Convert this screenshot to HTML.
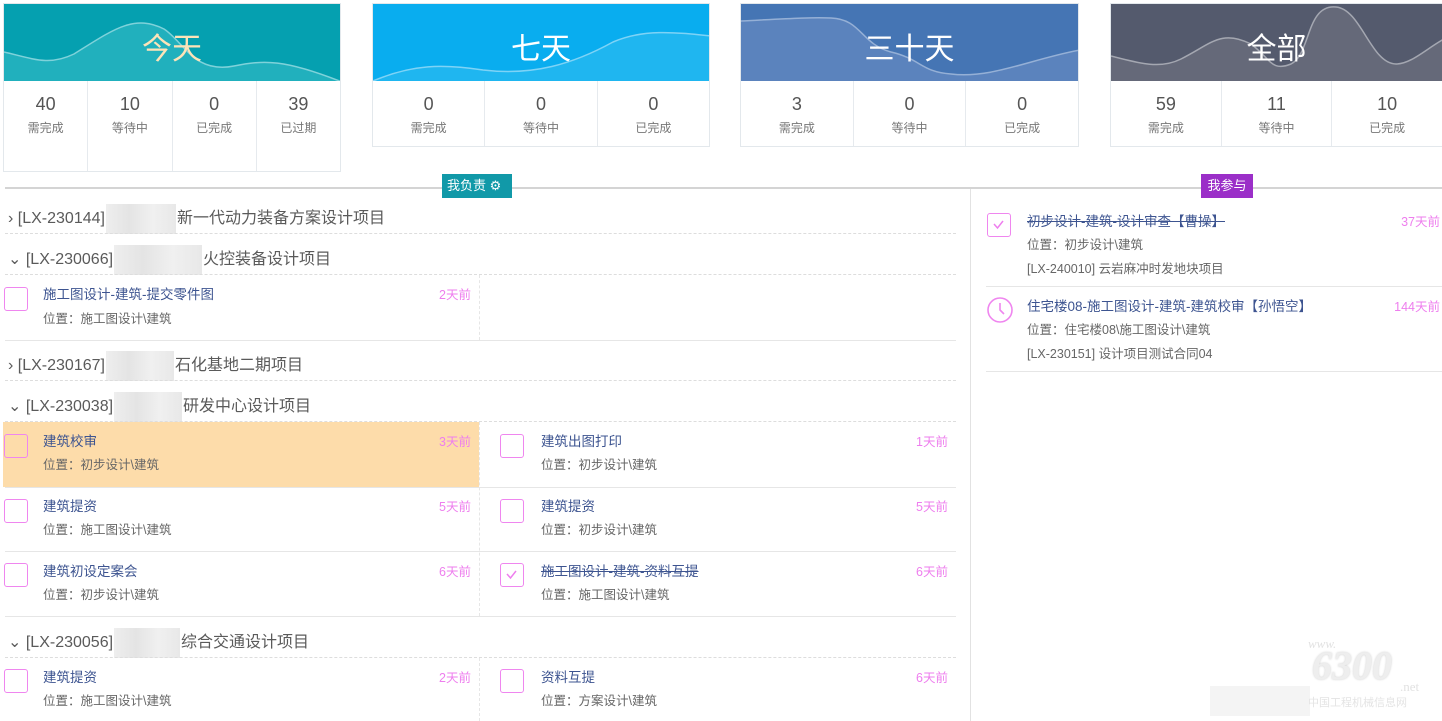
<!DOCTYPE html>
<html><head><meta charset="utf-8"><style>
*{margin:0;padding:0;box-sizing:border-box}
body{width:1442px;height:721px;overflow:hidden;background:#fff;font-family:"Liberation Sans","Noto Sans CJK SC",sans-serif;position:relative;color:#555}
.a{position:absolute}
.card{position:absolute;top:3px;border:1px solid #e3e8ec;background:#fff}
.hd{position:absolute;left:0;top:0;right:0;height:77px;overflow:hidden}
.hd span{position:absolute;left:0;right:0;top:20px;text-align:center;font-size:30px;color:#fff}
.cells{position:absolute;top:77px;left:0;right:0;bottom:0;display:flex}
.cells div{flex:1;border-right:1px solid #e6eaee;text-align:center}
.cells div:last-child{border-right:none}
.cells b{display:block;font-weight:normal;font-size:18px;color:#555;margin-top:13px}
.cells i{display:block;font-style:normal;font-size:12px;color:#777;margin-top:4px}
.gh{position:absolute;left:8px;font-size:16px;color:#5a5a5a;line-height:20px;white-space:nowrap}
.blur{display:inline-block;height:30px;vertical-align:middle;background:linear-gradient(90deg,#eee,#e4e4e4,#f0f0f0,#e8e8e8);margin:0 1px}
.dash{position:absolute;left:5px;width:951px;border-top:1px dashed #ddd}
.cb{position:absolute;width:24px;height:24px;border:1.5px solid #ef86ef;border-radius:3px}
.t{position:absolute;font-size:13.5px;color:#3d5490;white-space:nowrap;line-height:16px}
.l{position:absolute;font-size:12.5px;color:#666;white-space:nowrap;line-height:16px}
.tm{position:absolute;font-size:12.5px;color:#ee7eee;line-height:16px;text-align:right}
.s{text-decoration:line-through}
.hl{position:absolute;border-top:1px solid #e6e6e6}
</style></head><body>

<div class="card" style="left:3px;width:338px;height:169px">
 <div class="hd" style="background:#05a0b0"><svg width="338" height="77" class="a" style="left:0;top:0"><path d="M0 48 C30 55 45 62 70 50 C110 25 130 10 160 25 C180 38 190 70 230 62 C260 56 280 55 338 78 L0 78Z" fill="#21b0bd"/><path d="M0 48 C30 55 45 62 70 50 C110 25 130 10 160 25 C180 38 190 70 230 62 C260 56 280 55 338 78" stroke="#7fd2da" stroke-width="1.5" fill="none"/></svg><span style="color:#fde3b8">今天</span></div>
 <div class="cells"><div><b>40</b><i>需完成</i></div><div><b>10</b><i>等待中</i></div><div><b>0</b><i>已完成</i></div><div><b>39</b><i>已过期</i></div></div>
</div>
<div class="card" style="left:372px;width:338px;height:144px">
 <div class="hd" style="background:#09adef"><svg width="338" height="77" class="a" style="left:0;top:0"><path d="M0 77 C40 60 70 60 110 66 C160 72 200 60 240 38 C270 25 300 28 338 32 L338 78 L0 78Z" fill="#1fb6f0"/><path d="M0 77 C40 60 70 60 110 66 C160 72 200 60 240 38 C270 25 300 28 338 32" stroke="#7ed3f6" stroke-width="1.5" fill="none"/></svg><span>七天</span></div>
 <div class="cells"><div><b>0</b><i>需完成</i></div><div><b>0</b><i>等待中</i></div><div><b>0</b><i>已完成</i></div></div>
</div>
<div class="card" style="left:740px;width:339px;height:144px">
 <div class="hd" style="background:#4575b4"><svg width="339" height="77" class="a" style="left:0;top:0"><path d="M0 17 C40 15 70 13 90 14 C120 15 120 40 150 48 C180 55 180 68 210 70 C250 75 290 55 339 46 L339 78 L0 78Z" fill="#5b83bd"/><path d="M0 17 C40 15 70 13 90 14 C120 15 120 40 150 48 C180 55 180 68 210 70 C250 75 290 55 339 46" stroke="#95b0d6" stroke-width="1.5" fill="none"/></svg><span>三十天</span></div>
 <div class="cells"><div><b>3</b><i>需完成</i></div><div><b>0</b><i>等待中</i></div><div><b>0</b><i>已完成</i></div></div>
</div>
<div class="card" style="left:1110px;width:333px;height:144px">
 <div class="hd" style="background:#545a6d"><svg width="333" height="77" class="a" style="left:0;top:0"><path d="M0 52 C30 60 50 65 70 55 C100 40 110 25 140 40 C160 55 160 68 180 60 C200 50 195 0 225 3 C250 5 260 60 285 60 C300 60 315 45 333 35 L333 78 L0 78Z" fill="#656979"/><path d="M0 52 C30 60 50 65 70 55 C100 40 110 25 140 40 C160 55 160 68 180 60 C200 50 195 0 225 3 C250 5 260 60 285 60 C300 60 315 45 333 35" stroke="#a4a7b1" stroke-width="1.5" fill="none"/></svg><span>全部</span></div>
 <div class="cells"><div><b>59</b><i>需完成</i></div><div><b>11</b><i>等待中</i></div><div><b>10</b><i>已完成</i></div></div>
</div>

<div class="a" style="left:5px;top:187px;width:1437px;height:2px;background:#d4d4d4"></div>
<div class="a" style="left:970px;top:189px;width:1px;height:532px;background:#e2e2e2"></div>
<div class="a" style="left:442px;top:174px;width:70px;height:24px;background:#1199a8;color:#fff;font-size:13px;line-height:24px;padding-left:5px">我负责 ⚙</div>
<div class="a" style="left:1201px;top:174px;width:52px;height:24px;background:#9b2fc8;color:#fff;font-size:13px;line-height:24px;text-align:center">我参与</div>

<div class="gh" style="top:204px">›&nbsp;[LX-230144]<span class="blur" style="width:70px"></span>新一代动力装备方案设计项目</div>
<div class="dash" style="top:233px"></div>
<div class="gh" style="top:245px">⌄&nbsp;[LX-230066]<span class="blur" style="width:88px"></span>火控装备设计项目</div>
<div class="dash" style="top:274px"></div>
<div class="a" style="left:479px;top:275px;height:65px;border-left:1px dashed #e6e6e6"></div>
<div class="hl" style="left:5px;width:951px;top:340px"></div>
<div class="gh" style="top:351px">›&nbsp;[LX-230167]<span class="blur" style="width:68px"></span>石化基地二期项目</div>
<div class="dash" style="top:380px"></div>
<div class="gh" style="top:392px">⌄&nbsp;[LX-230038]<span class="blur" style="width:68px"></span>研发中心设计项目</div>
<div class="dash" style="top:421px"></div>
<div class="a" style="left:3px;top:422px;width:476px;height:65px;background:#fddcaa"></div>
<div class="a" style="left:479px;top:422px;height:194px;border-left:1px dashed #e6e6e6"></div>
<div class="hl" style="left:5px;width:951px;top:487px"></div>
<div class="hl" style="left:5px;width:951px;top:551px"></div>
<div class="hl" style="left:5px;width:951px;top:616px"></div>
<div class="gh" style="top:628px">⌄&nbsp;[LX-230056]<span class="blur" style="width:66px"></span>综合交通设计项目</div>
<div class="dash" style="top:657px"></div>
<div class="a" style="left:479px;top:658px;height:63px;border-left:1px dashed #e6e6e6"></div>

<div class="cb" style="left:4px;top:287px"></div><div class="t" style="left:43px;top:287px">施工图设计-建筑-提交零件图</div><div class="l" style="left:43px;top:311px">位置：施工图设计\建筑</div><div class="tm" style="left:400px;width:71px;top:287px">2天前</div>
<div class="cb" style="left:4px;top:434px"></div><div class="t" style="left:43px;top:434px">建筑校审</div><div class="l" style="left:43px;top:457px">位置：初步设计\建筑</div><div class="tm" style="left:400px;width:71px;top:434px">3天前</div>
<div class="cb" style="left:4px;top:499px"></div><div class="t" style="left:43px;top:499px">建筑提资</div><div class="l" style="left:43px;top:522px">位置：施工图设计\建筑</div><div class="tm" style="left:400px;width:71px;top:499px">5天前</div>
<div class="cb" style="left:4px;top:563px"></div><div class="t" style="left:43px;top:564px">建筑初设定案会</div><div class="l" style="left:43px;top:587px">位置：初步设计\建筑</div><div class="tm" style="left:400px;width:71px;top:564px">6天前</div>
<div class="cb" style="left:4px;top:669px"></div><div class="t" style="left:43px;top:670px">建筑提资</div><div class="l" style="left:43px;top:693px">位置：施工图设计\建筑</div><div class="tm" style="left:400px;width:71px;top:670px">2天前</div>
<div class="cb" style="left:500px;top:434px"></div><div class="t" style="left:541px;top:434px">建筑出图打印</div><div class="l" style="left:541px;top:457px">位置：初步设计\建筑</div><div class="tm" style="left:880px;width:68px;top:434px">1天前</div>
<div class="cb" style="left:500px;top:499px"></div><div class="t" style="left:541px;top:499px">建筑提资</div><div class="l" style="left:541px;top:522px">位置：初步设计\建筑</div><div class="tm" style="left:880px;width:68px;top:499px">5天前</div>
<div class="cb" style="left:500px;top:563px"><svg width="21" height="21" class="a" style="left:0;top:0"><path d="M6 10 L9.5 14 L15 7" stroke="#ee7eee" stroke-width="1.5" fill="none"/></svg></div><div class="t s" style="left:541px;top:564px">施工图设计-建筑-资料互提</div><div class="l" style="left:541px;top:587px">位置：施工图设计\建筑</div><div class="tm" style="left:880px;width:68px;top:564px">6天前</div>
<div class="cb" style="left:500px;top:669px"></div><div class="t" style="left:541px;top:670px">资料互提</div><div class="l" style="left:541px;top:693px">位置：方案设计\建筑</div><div class="tm" style="left:880px;width:68px;top:670px">6天前</div>

<div class="cb" style="left:987px;top:213px"><svg width="21" height="21" class="a" style="left:0;top:0"><path d="M6 10 L9.5 14 L15 7" stroke="#ee7eee" stroke-width="1.5" fill="none"/></svg></div>
<div class="t s" style="left:1027px;top:214px">初步设计-建筑-设计审查【曹操】</div>
<div class="l" style="left:1027px;top:237px">位置：初步设计\建筑</div>
<div class="l" style="left:1027px;top:261px">[LX-240010] 云岩麻冲时发地块项目</div>
<div class="tm" style="left:1370px;width:70px;top:214px">37天前</div>
<div class="hl" style="left:986px;width:456px;top:286px"></div>
<svg class="a" style="left:986px;top:296px" width="28" height="28"><circle cx="14" cy="14" r="12" stroke="#ef86ef" stroke-width="1.6" fill="none"/><path d="M14 7 V14 L18 18" stroke="#ef86ef" stroke-width="1.6" fill="none"/></svg>
<div class="t" style="left:1027px;top:299px">住宅楼08-施工图设计-建筑-建筑校审【孙悟空】</div>
<div class="l" style="left:1027px;top:322px">位置：住宅楼08\施工图设计\建筑</div>
<div class="l" style="left:1027px;top:346px">[LX-230151] 设计项目测试合同04</div>
<div class="tm" style="left:1370px;width:70px;top:299px">144天前</div>
<div class="hl" style="left:986px;width:456px;top:371px"></div>

<div class="a" style="left:1210px;top:686px;width:100px;height:30px;background:#f4f4f4"></div>
<div class="a" style="left:1308px;top:636px;font-family:'Liberation Serif',serif;font-style:italic;color:#e2e2e2;font-size:13px">www.</div>
<div class="a" style="left:1312px;top:642px;font-family:'Liberation Serif',serif;font-style:italic;font-weight:bold;color:#eee;font-size:40px;text-shadow:0 0 2px #ccc">6300</div>
<div class="a" style="left:1400px;top:679px;font-family:'Liberation Serif',serif;color:#e2e2e2;font-size:13px">.net</div>
<div class="a" style="left:1308px;top:694px;color:#e4e4e4;font-size:11px">中国工程机械信息网</div>
</body></html>
